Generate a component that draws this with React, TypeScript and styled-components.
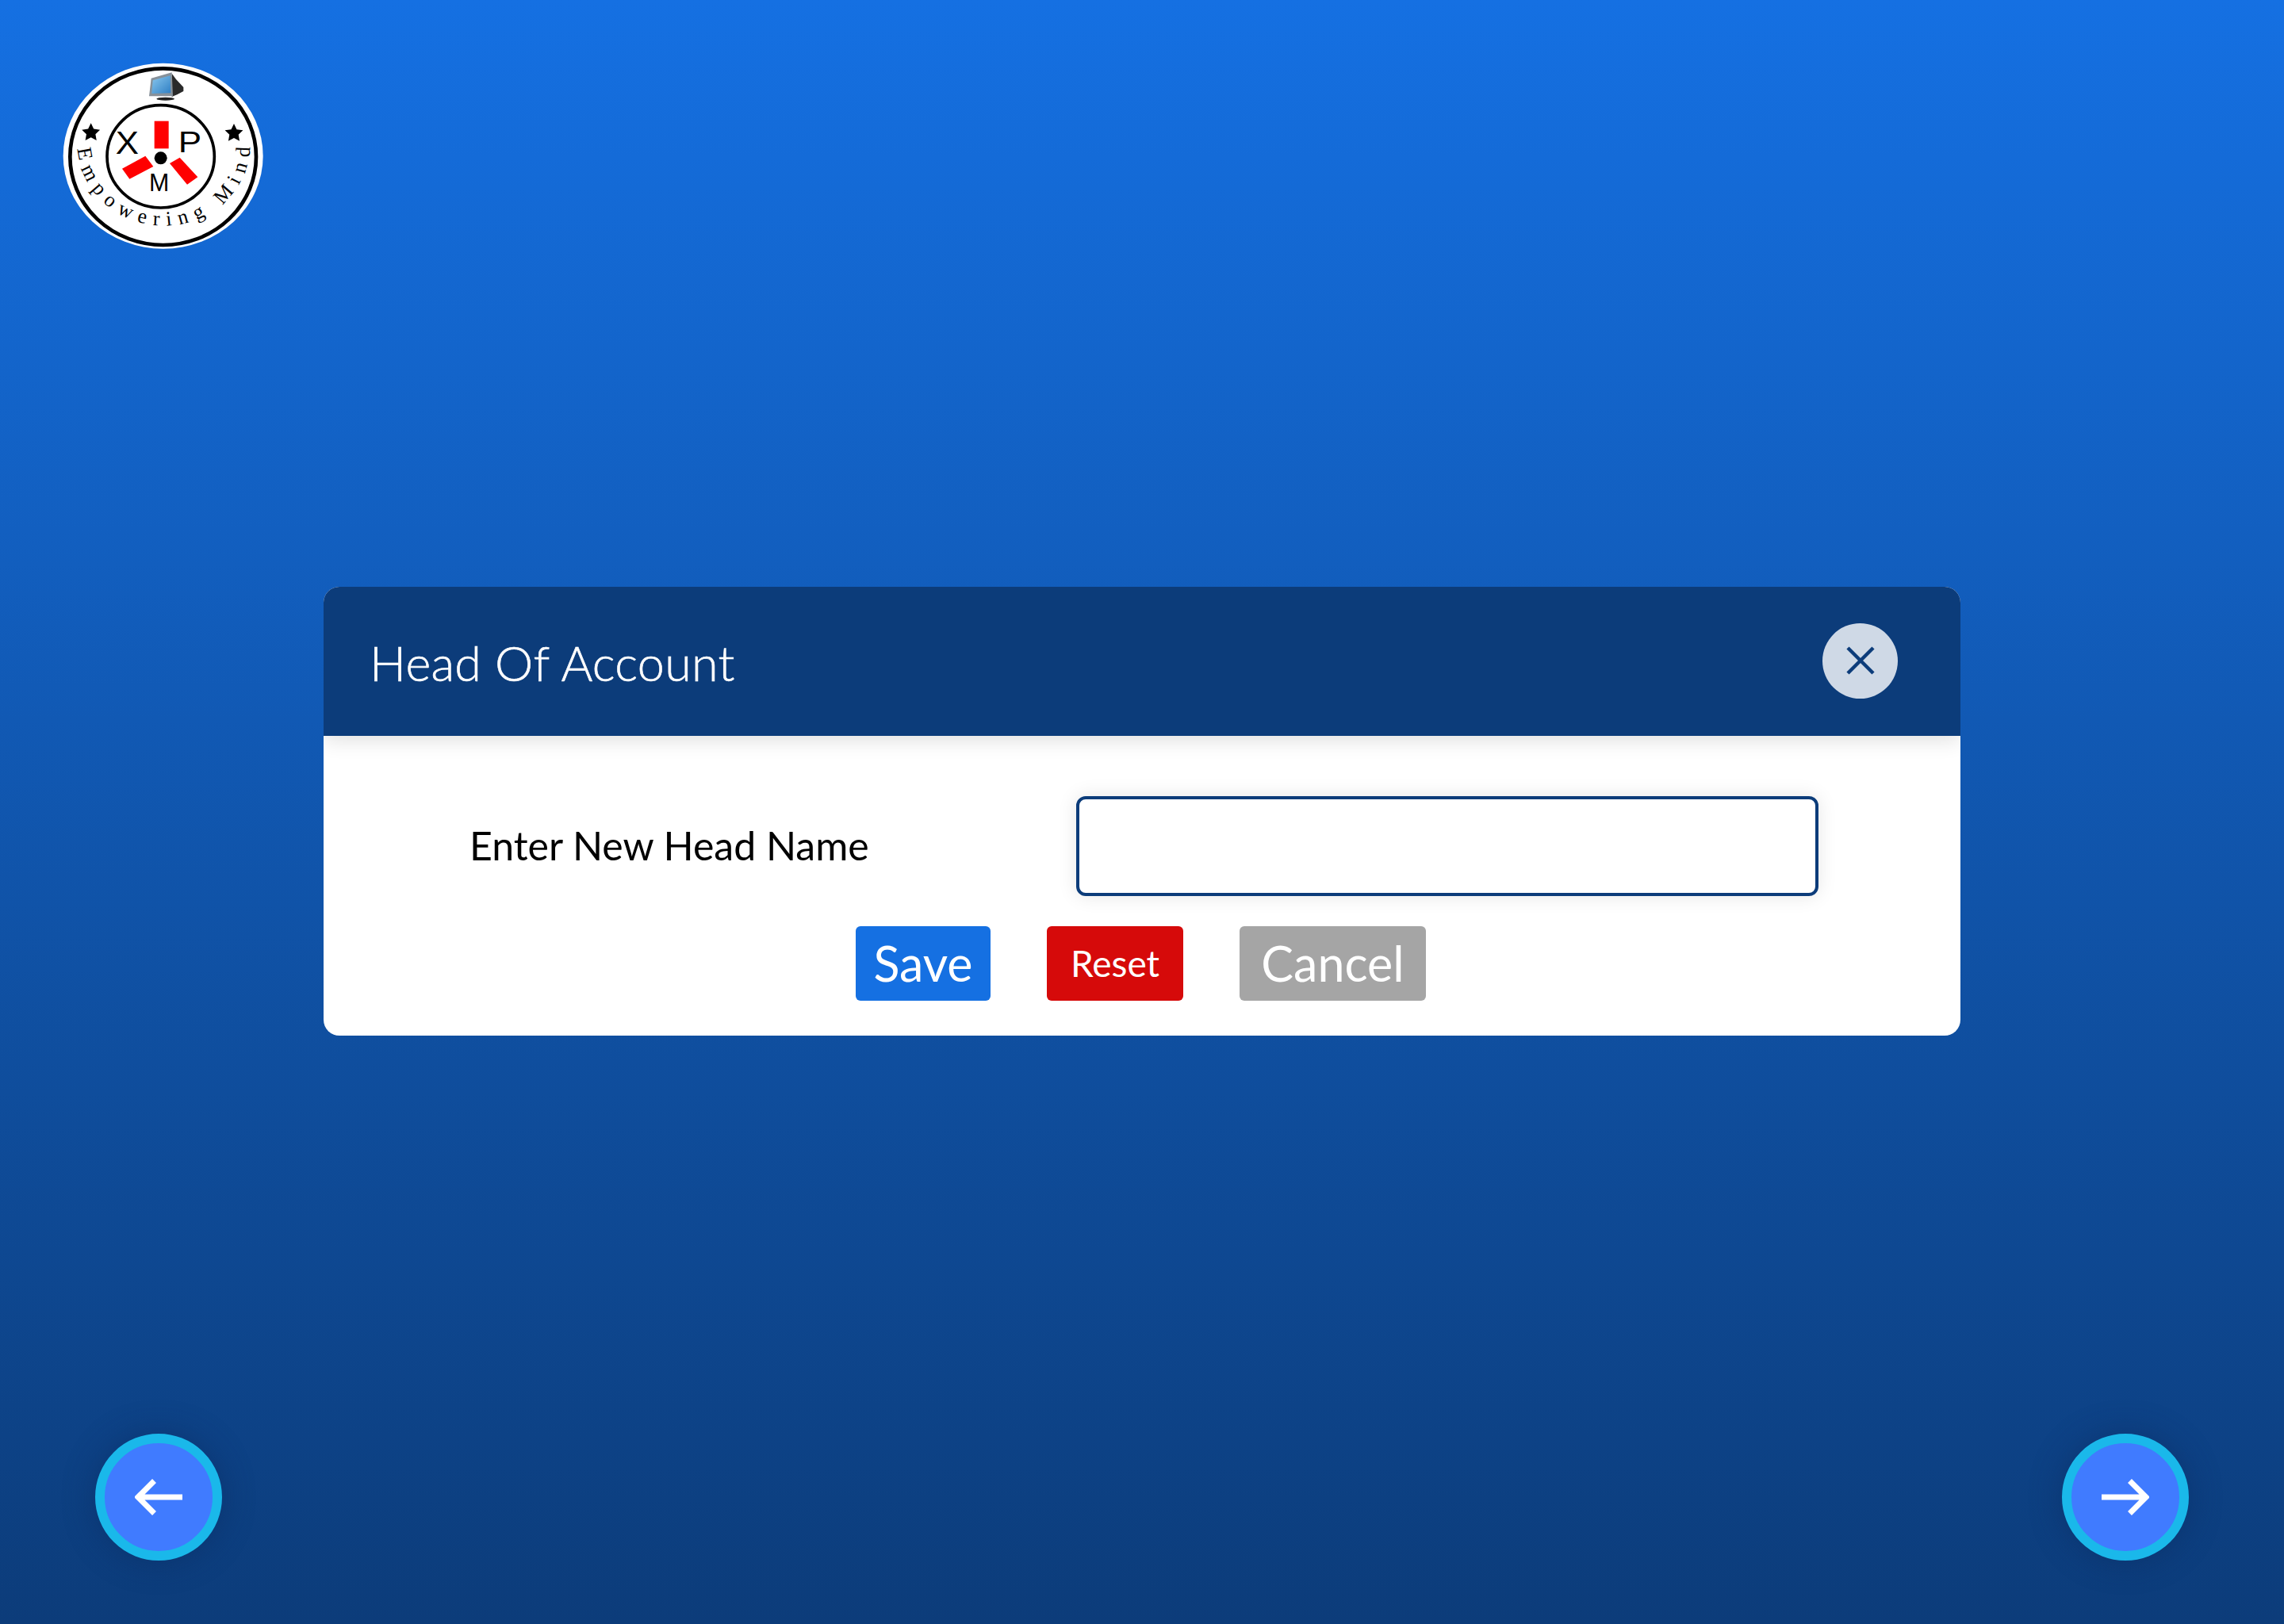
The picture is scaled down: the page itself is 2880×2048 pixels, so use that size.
import React from "react";
import styled, { createGlobalStyle } from "styled-components";

const Global = createGlobalStyle`
  html, body { margin: 0; padding: 0; }
  body { font-family: Lato, "Open Sans", sans-serif; }
`;

const Page = styled.div`
  width: 2880px;
  height: 2048px;
  box-sizing: border-box;
  padding-bottom: 2px;
  display: grid;
  grid-template-rows: 1fr auto 1fr;
  background: linear-gradient(180deg, #1570e2 0%, #0c3c7a 100%);
  overflow: hidden;
`;
const TopBar = styled.header`
  padding: 60px 0 0 60px;
`;
const Logo = styled.svg`
  display: block;
  width: 290px;
  height: 270px;
`;
const Dialog = styled.section`
  width: 2064px;
  justify-self: center;
  background: #fff;
  border-radius: 20px;
  overflow: hidden;
`;
const DialogHeader = styled.div`
  height: 188px;
  box-sizing: border-box;
  padding: 0 79px 0 58px;
  display: flex;
  align-items: center;
  justify-content: space-between;
  background: #0c3c7a;
  box-shadow: 0 6px 24px rgba(0, 0, 0, 0.12);
  position: relative;
`;
const Title = styled.h1`
  margin: 2px 0 0;
  font-size: 61px;
  font-weight: 300;
  letter-spacing: 0.3px;
  -webkit-text-stroke: 0.6px #fff;
  color: #fff;
`;
const CloseButton = styled.button`
  width: 95px;
  height: 95px;
  padding: 0;
  border: 0;
  border-radius: 50%;
  background: #cfd9e6;
  color: #0c3c7a;
  display: flex;
  align-items: center;
  justify-content: center;
  margin-top: -2px;
`;
const DialogBody = styled.div`
  padding: 76px 0 44px;
`;
const FieldRow = styled.div`
  display: grid;
  grid-template-columns: 765px 936px;
  padding-left: 184px;
  align-items: center;
`;
const FieldLabel = styled.label`
  padding-bottom: 2px;
  font-size: 50px;
  font-weight: 400;
  color: #000;
`;
const TextField = styled.input`
  height: 126px;
  box-sizing: border-box;
  border: 4px solid #0c3c7a;
  border-radius: 12px;
  background: #fff;
  box-shadow: 0 0 24px rgba(0, 0, 0, 0.1);
  outline: none;
`;
const ButtonRow = styled.div`
  margin-top: 38px;
  padding-right: 3px;
  display: flex;
  justify-content: center;
  gap: 71px;
`;
const ActionButton = styled.button<{ $bg: string; $size: number; $width: number }>`
  width: ${(p) => p.$width}px;
  height: 94px;
  padding: 0 0 2px;
  border: 0;
  border-radius: 6px;
  background: ${(p) => p.$bg};
  color: #fff;
  font-family: Lato, "Open Sans", sans-serif;
  font-size: ${(p) => p.$size}px;
  font-weight: 400;
`;
const BottomBar = styled.footer`
  align-self: end;
  display: flex;
  justify-content: space-between;
  padding: 0 120px 78px;
`;
const NavButton = styled.button`
  width: 160px;
  height: 160px;
  padding: 0;
  box-sizing: border-box;
  border: 12px solid #1ab8ea;
  border-radius: 50%;
  background: #407bff;
  color: #fff;
  display: flex;
  align-items: center;
  justify-content: center;
  box-shadow: 0 0 40px rgba(10, 40, 90, 0.45);
`;

const starPoints = (cx: number, cy: number, R: number) =>
  Array.from({ length: 10 }, (_, i) => {
    const r = i % 2 ? R * 0.5 : R;
    const a = -Math.PI / 2 + (i * Math.PI) / 5;
    return `${cx + r * Math.cos(a)},${cy + r * Math.sin(a)}`;
  }).join(" ");

const XpmLogo = () => (
  <Logo viewBox="0 0 870 810">
    <defs>
      <linearGradient id="scr" x1="0" y1="0" x2="1" y2="1">
        <stop offset="0" stopColor="#8ac8ee" />
        <stop offset="1" stopColor="#2f7fc4" />
      </linearGradient>
    </defs>
    <ellipse cx="437" cy="410" rx="378" ry="351" fill="#fff" />
    <ellipse cx="437" cy="413" rx="352" ry="334" fill="none" stroke="#000" strokeWidth="14" />
    <ellipse cx="428" cy="412" rx="203" ry="194" fill="none" stroke="#000" strokeWidth="11" />
    <polygon points="470,98 486,120 514,150 514,165 490,178 470,186" fill="#2a2a2a" />
    <polygon points="392,116 470,94 474,184 384,184" fill="#87919a" />
    <polygon points="398,124 464,106 466,172 394,174" fill="url(#scr)" />
    <ellipse cx="446" cy="194" rx="34" ry="6" fill="#222" />
    <rect x="404" y="278" width="54" height="104" fill="#f00" />
    <polygon points="282,458 370,410 400,450 310,497" fill="#f00" />
    <polygon points="462,438 500,416 568,490 528,518" fill="#f00" />
    <circle cx="428" cy="418" r="24" fill="#000" />
    <polygon points={starPoints(164, 322, 36)} fill="#000" />
    <polygon points={starPoints(705, 324, 36)} fill="#000" />
    <text transform="translate(301 403) scale(1.06 1)" fontFamily="Liberation Sans, sans-serif" fontSize="124" textAnchor="middle" fill="#000">X</text>
    <text transform="translate(538 396) scale(1.18 1)" fontFamily="Liberation Sans, sans-serif" fontSize="112" textAnchor="middle" fill="#000">P</text>
    <text transform="translate(422 542) scale(0.95 1)" fontFamily="Liberation Sans, sans-serif" fontSize="96" textAnchor="middle" fill="#000">M</text>
    <path id="ring" d="M 114 368 A 324 304 0 0 0 766 368" fill="none" />
    <text fontFamily="Liberation Serif, serif" fontSize="78" letterSpacing="27" fill="#000">
      <textPath href="#ring" startOffset="14">Empowering Mind</textPath>
    </text>
  </Logo>
);

const Arrow = ({ dir }: { dir: "left" | "right" }) => (
  <svg width="60" height="46" viewBox="0 0 60 46" fill="none" stroke="currentColor" strokeWidth="7">
    {dir === "left" ? (
      <path d="M60 23H4M24.5 2.5L4 23l20.5 20.5" />
    ) : (
      <path d="M0 23h56M35.5 2.5L56 23 35.5 43.5" />
    )}
  </svg>
);

export default function App() {
  return (
    <>
      <Global />
      <Page>
        <TopBar>
          <XpmLogo />
        </TopBar>
        <Dialog>
          <DialogHeader>
            <Title>Head Of Account</Title>
            <CloseButton aria-label="Close">
              <svg width="36" height="36" viewBox="0 0 36 36" stroke="currentColor" strokeWidth="4.5" fill="none">
                <path d="M2 2l32 32M34 2L2 34" />
              </svg>
            </CloseButton>
          </DialogHeader>
          <DialogBody>
            <FieldRow>
              <FieldLabel>Enter New Head Name</FieldLabel>
              <TextField type="text" />
            </FieldRow>
            <ButtonRow>
              <ActionButton $bg="#1570e2" $size={61} $width={170}>Save</ActionButton>
              <ActionButton $bg="#d60a0a" $size={46} $width={172}>Reset</ActionButton>
              <ActionButton $bg="#a5a5a5" $size={61} $width={235}>Cancel</ActionButton>
            </ButtonRow>
          </DialogBody>
        </Dialog>
        <BottomBar>
          <NavButton aria-label="Back"><Arrow dir="left" /></NavButton>
          <NavButton aria-label="Next"><Arrow dir="right" /></NavButton>
        </BottomBar>
      </Page>
    </>
  );
}
